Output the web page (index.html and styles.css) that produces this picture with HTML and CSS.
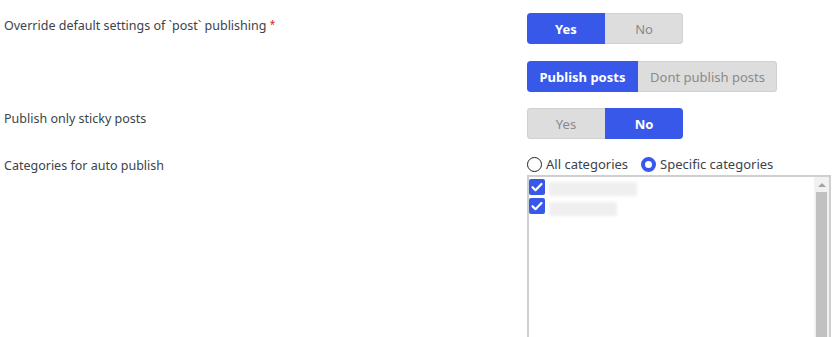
FILE: index.html
```html
<!DOCTYPE html>
<html>
<head>
<meta charset="utf-8">
<link rel="stylesheet" href="styles.css">
</head>
<body>
<div class="form">
  <div class="label">Override default settings of `post` publishing <span class="req">*</span></div>
  <div class="control">
    <div class="seg">
      <span class="opt on w78">Yes</span><span class="opt w78">No</span>
    </div>
  </div>

  <div class="label second"></div>
  <div class="control second">
    <div class="seg">
      <span class="opt on w111">Publish posts</span><span class="opt w139">Dont publish posts</span>
    </div>
  </div>

  <div class="label">Publish only sticky posts</div>
  <div class="control">
    <div class="seg">
      <span class="opt w78">Yes</span><span class="opt on w78">No</span>
    </div>
  </div>

  <div class="label cat">Categories for auto publish</div>
  <div class="control">
    <div class="radios">
      <label class="radio"><span class="dot"></span>All categories</label>
      <label class="radio"><span class="dot sel"></span>Specific categories</label>
    </div>
    <div class="listbox">
      <div class="items">
        <div class="item"><span class="cb"><svg viewBox="0 0 16 16" width="16" height="16"><path d="M3.5 8.2l3 3 6-6.2" fill="none" stroke="#fff" stroke-width="2.2" stroke-linecap="round" stroke-linejoin="round"/></svg></span><span class="blur b1"></span></div>
        <div class="item"><span class="cb"><svg viewBox="0 0 16 16" width="16" height="16"><path d="M3.5 8.2l3 3 6-6.2" fill="none" stroke="#fff" stroke-width="2.2" stroke-linecap="round" stroke-linejoin="round"/></svg></span><span class="blur b2"></span></div>
      </div>
      <div class="scroll">
        <div class="arrow"></div>
        <div class="thumb"></div>
      </div>
    </div>
  </div>
</div>
</body>
</html>
```

FILE: styles.css
```css
html, body {
  margin: 0;
  padding: 0;
  background: #fff;
}
body {
  font-family: "Noto Sans", "Open Sans", sans-serif;
  font-size: 12.5px;
  color: #3c434a;
  overflow: hidden;
}
.form {
  display: grid;
  grid-template-columns: 523px 1fr;
  padding: 13px 2px 0 4px;
  row-gap: 16px;
}
.second {
  margin-top: 1px;
}
.label {
  line-height: 18px;
  padding-top: 2px;
}
.label.cat {
  padding-top: 2px;
}
.req {
  color: #e02020;
  font-size: 10px;
  vertical-align: 2px;
}
.seg {
  display: inline-flex;
  height: 31px;
  border-radius: 4px;
  overflow: hidden;
  background: #dddddd;
  box-shadow: inset 0 0 0 1px #d0d0d0;
}
.opt {
  display: flex;
  align-items: center;
  justify-content: center;
  color: #8a8a8a;
  font-size: 13px;
}
.opt.on {
  background: #3858e9;
  color: #fff;
  font-weight: bold;
}
.w78 { width: 78px; }
.w111 { width: 111px; }
.w139 { width: 139px; }
.radios {
  display: flex;
  align-items: center;
  gap: 13px;
  height: 18px;
  font-size: 13px;
  color: #3c434a;
}
.radio {
  display: flex;
  align-items: center;
  gap: 4px;
}
.dot {
  width: 15px;
  height: 15px;
  border: 1.5px solid #222;
  border-radius: 50%;
  box-sizing: border-box;
}
.dot.sel {
  border: 4.5px solid #3858e9;
  background: #fff;
}
.listbox {
  margin-top: 2px;
  height: 200px;
  border: 2px solid #cfcfcf;
  display: flex;
  background: #fff;
}
.items {
  flex: 1;
}
.item {
  display: flex;
  align-items: center;
  height: 19px;
  gap: 4px;
}
.cb {
  width: 16px;
  height: 16px;
  background: #3858e9;
  border-radius: 2px;
  display: flex;
}
.blur {
  height: 14px;
  background: #efefef;
  filter: blur(1.5px);
}
.b1 { width: 88px; margin-top: 4px; }
.b2 { width: 68px; margin-top: 6px; }
.scroll {
  width: 15px;
  background: #f1f1f1;
  display: flex;
  flex-direction: column;
  align-items: center;
}
.arrow {
  width: 0;
  height: 0;
  margin: 6px 0 5px;
  border-left: 4px solid transparent;
  border-right: 4px solid transparent;
  border-bottom: 4px solid #a3a3a3;
}
.thumb {
  width: 11px;
  flex: 1;
  background: #c1c1c1;
}
```
